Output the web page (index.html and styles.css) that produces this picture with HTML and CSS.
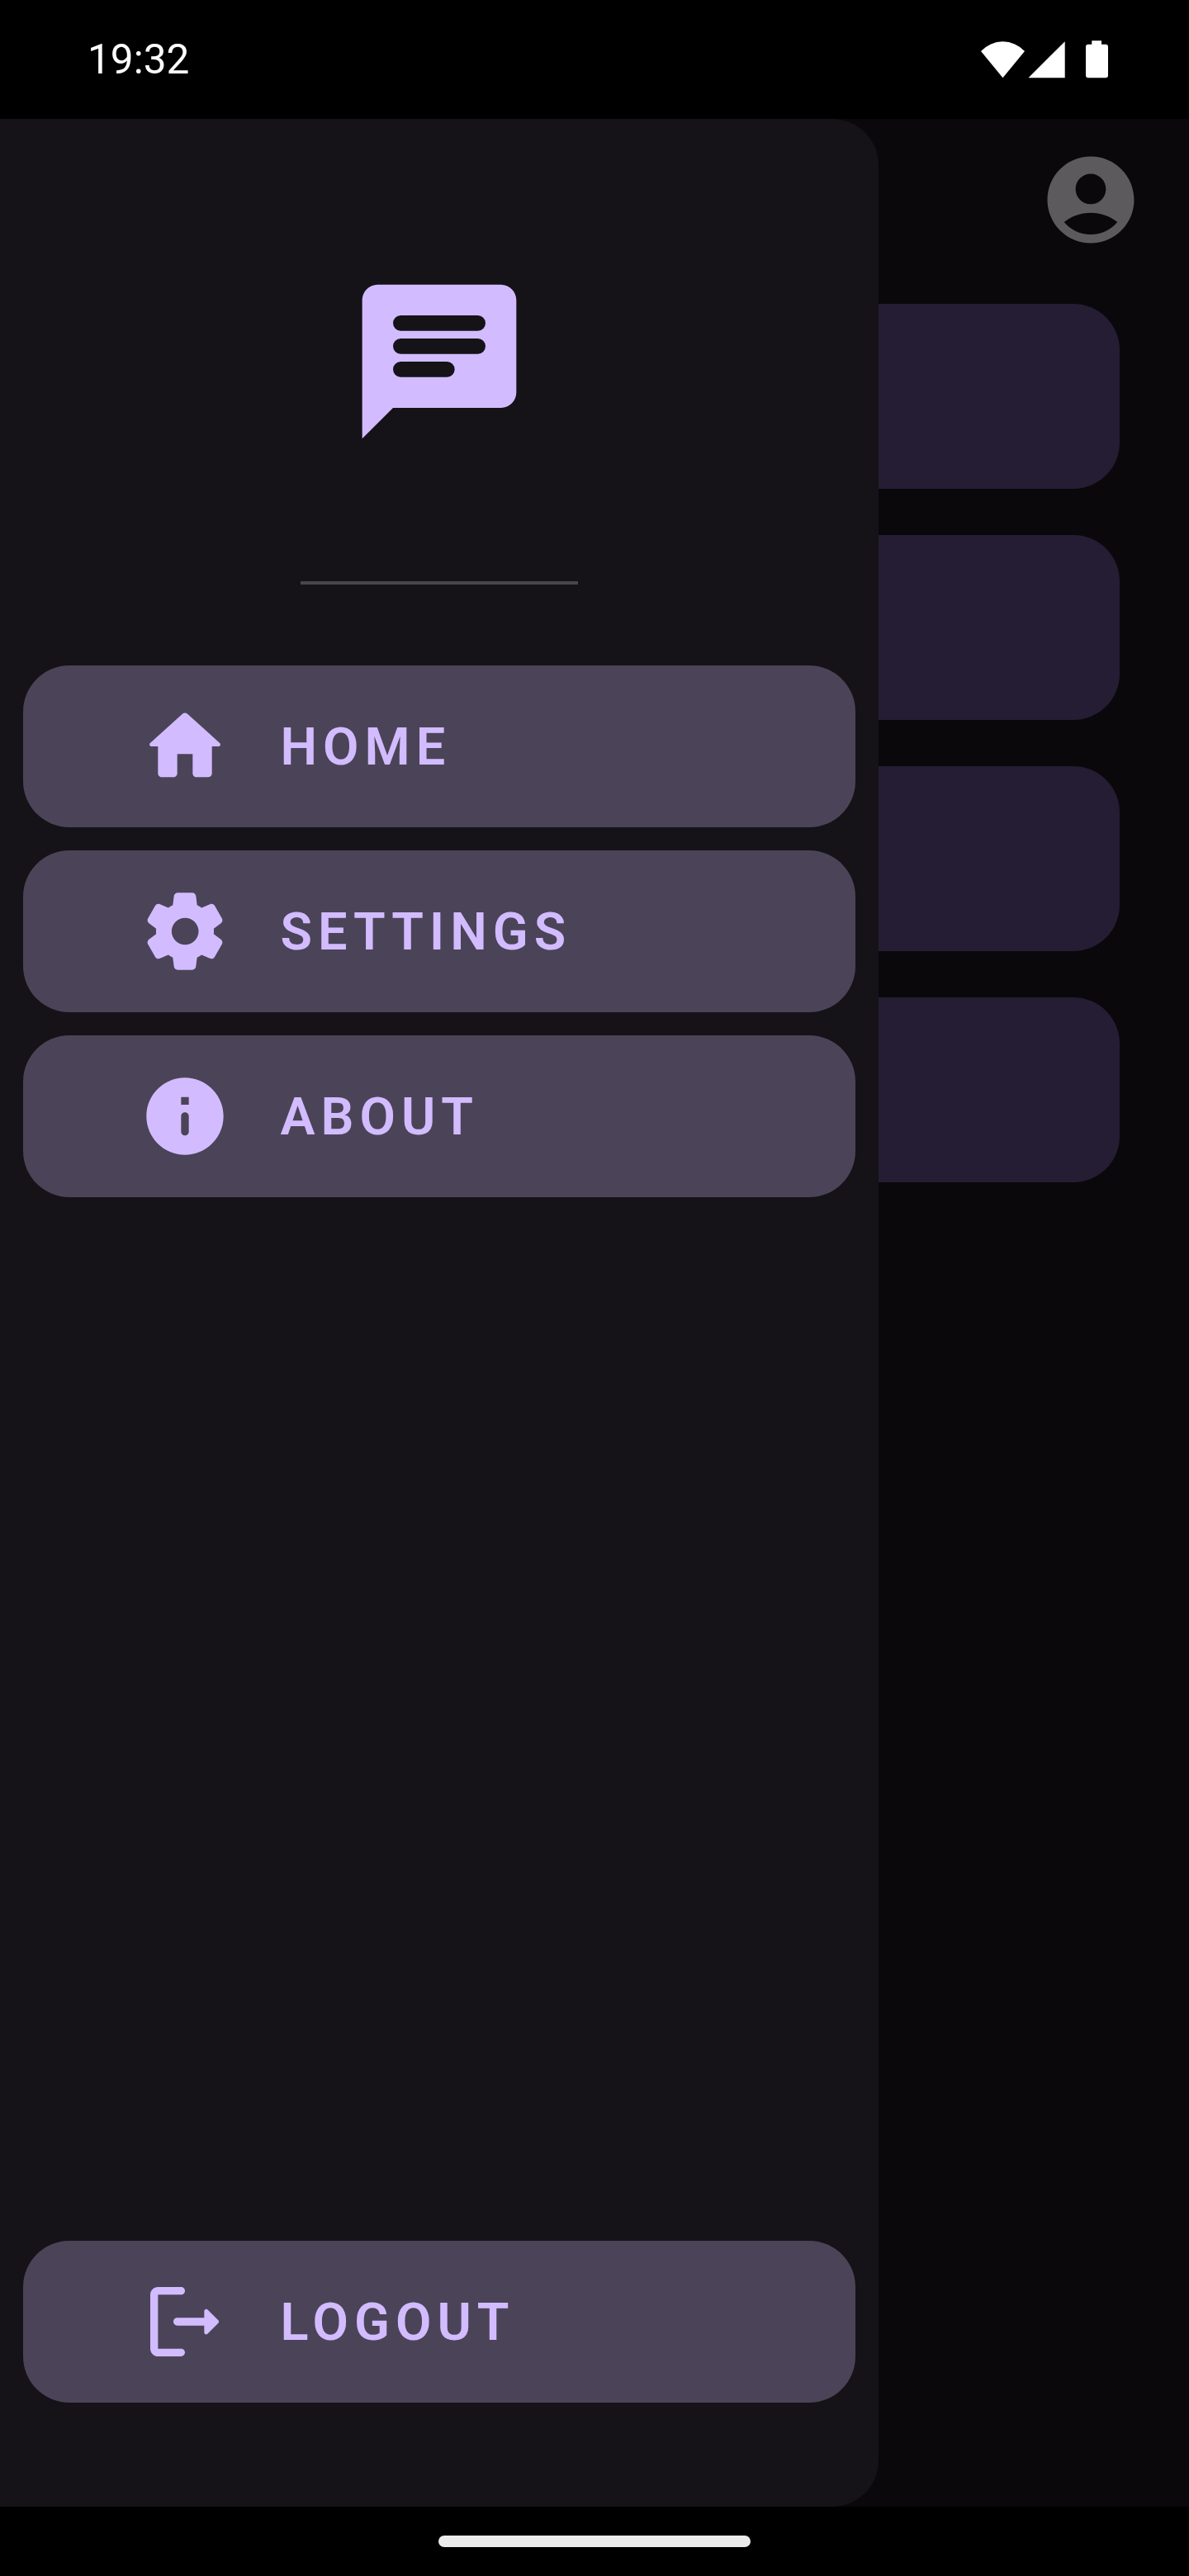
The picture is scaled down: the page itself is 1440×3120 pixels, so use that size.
FILE: index.html
```html
<!DOCTYPE html>
<html lang="en">
<head>
<meta charset="utf-8">
<title>Navigation drawer</title>
<link rel="stylesheet" href="styles.css">
</head>
<body>
<div class="screen">
  <header class="status-bar">
    <span class="clock">19:32</span>
    <svg class="status-icons" viewBox="0 0 156 48" aria-hidden="true">
      <path d="M26.500 46.300L0 14A36 36 0 0 1 53 14Z"/>
      <path d="M57.500 46.300H101.700V2.200Z"/>
      <path d="M134.300 1.200H146V5.700H151a3 3 0 0 1 3 3V43.300a3 3 0 0 1-3 3H130a3 3 0 0 1-3-3V8.700a3 3 0 0 1 3-3H134.300Z"/>
    </svg>
  </header>

  <div class="stage">
    <main class="content">
      <div class="toolbar">
        <svg class="avatar" viewBox="0 0 24 24" aria-hidden="true"><path fill-rule="evenodd" d="M12 2C6.480 2 2 6.480 2 12s4.480 10 10 10 10-4.480 10-10S17.520 2 12 2zM12 6c1.930 0 3.500 1.570 3.500 3.500S13.930 13 12 13s-3.500-1.570-3.500-3.500S10.070 6 12 6zM5.860 17.120C7.550 15.800 9.680 15 12 15s4.450.8 6.140 2.120C16.680 18.880 14.470 20 12 20s-4.680-1.120-6.140-2.880z"/></svg>
      </div>
      <div class="cards">
        <div class="card"></div>
        <div class="card"></div>
        <div class="card"></div>
        <div class="card"></div>
      </div>
    </main>

    <nav class="drawer">
      <svg class="logo" viewBox="0 0 24 24" aria-hidden="true"><path fill-rule="evenodd" d="M20 2H4c-1.100 0-2 .9-2 2v18l4-4h14c1.100 0 2-.9 2-2V4c0-1.100-.9-2-2-2zM7 6h10a1 1 0 0 1 0 2H7a1 1 0 0 1 0-2zM7 9h10a1 1 0 0 1 0 2H7a1 1 0 0 1 0-2zM7 12h6a1 1 0 0 1 0 2H7a1 1 0 0 1 0-2z"/></svg>
      <div class="divider"></div>
      <div class="menu">
        <a class="item">
          <svg class="icon" viewBox="0 0 24 24" aria-hidden="true"><path d="M10 19v-5h4v5c0 .55.45 1 1 1h3c.55 0 1-.45 1-1v-7h1.700c.46 0 .68-.57.33-.87L12.670 3.600c-.38-.34-.96-.34-1.340 0l-8.360 7.530c-.34.3-.13.87.33.87H5v7c0 .55.45 1 1 1h3c.55 0 1-.45 1-1z"/></svg>
          <span class="label">HOME</span>
        </a>
        <a class="item">
          <svg class="icon" viewBox="0 0 24 24" aria-hidden="true"><path d="M19.500 12c0-.23-.01-.45-.03-.68l1.860-1.410c.4-.3.51-.86.26-1.300l-1.870-3.230c-.25-.44-.79-.62-1.250-.42l-2.150.91c-.37-.26-.76-.49-1.170-.68l-.29-2.310c-.06-.5-.49-.88-.99-.88h-3.730c-.51 0-.94.38-1 .88l-.29 2.310c-.41.19-.8.42-1.170.68l-2.150-.91c-.46-.2-1-.02-1.250.42L2.410 8.620c-.25.44-.14.99.26 1.300l1.860 1.410c-.02.22-.03.44-.03.67s.01.45.03.68l-1.860 1.410c-.4.3-.51.86-.26 1.300l1.870 3.230c.25.44.79.62 1.250.42l2.150-.91c.37.26.76.49 1.170.68l.29 2.310c.06.5.49.88.99.88h3.730c.5 0 .93-.38.99-.88l.29-2.310c.41-.19.8-.42 1.170-.68l2.150.91c.46.2 1 .02 1.250-.42l1.870-3.230c.25-.44.14-.99-.26-1.300l-1.860-1.410c.03-.23.04-.45.04-.68zm-7.460 3.500c-1.930 0-3.500-1.570-3.500-3.500s1.570-3.500 3.500-3.500 3.500 1.570 3.500 3.500-1.570 3.500-3.500 3.500z"/></svg>
          <span class="label">SETTINGS</span>
        </a>
        <a class="item">
          <svg class="icon" viewBox="0 0 24 24" aria-hidden="true"><path d="M12 2C6.480 2 2 6.480 2 12s4.480 10 10 10 10-4.480 10-10S17.520 2 12 2zm0 15c-.55 0-1-.45-1-1v-4c0-.55.45-1 1-1s1 .45 1 1v4c0 .55-.45 1-1 1zm1-8h-2V7h2v2z"/></svg>
          <span class="label">ABOUT</span>
        </a>
      </div>
      <a class="item">
        <svg class="icon" viewBox="0 0 24 24" aria-hidden="true"><path d="M5 5h6c.55 0 1-.45 1-1s-.45-1-1-1H5c-1.100 0-2 .9-2 2v14c0 1.100.9 2 2 2h6c.55 0 1-.45 1-1s-.45-1-1-1H5V5z"/><path d="M20.650 11.650l-2.790-2.790c-.32-.32-.86-.1-.86.35V11h-7c-.55 0-1 .45-1 1s.45 1 1 1h7v1.790c0 .45.54.67.85.35l2.790-2.790c.2-.19.2-.51.01-.7z"/></svg>
        <span class="label">LOGOUT</span>
      </a>
    </nav>
  </div>

  <footer class="nav-bar"><div class="handle"></div></footer>
</div>
</body>
</html>
```
FILE: styles.css
```css
* {
  box-sizing: border-box;
}

body {
  margin: 0;
  background: #000;
  font-family: Roboto, "Liberation Sans", sans-serif;
}

svg {
  display: block;
  flex: none;
}

.screen {
  display: flex;
  flex-direction: column;
  width: 1440px;
  height: 3120px;
  overflow: hidden;
}

.status-bar {
  display: flex;
  justify-content: space-between;
  align-items: center;
  height: 144px;
  padding: 0 96px 0 106px;
}

.clock {
  color: #fff;
  font-size: 49.500px;
  line-height: 60px;
}

.status-icons {
  width: 156px;
  height: 48px;
  fill: #fff;
}

/* Dimmed page and the drawer share one grid cell */
.stage {
  display: grid;
  flex: 1;
  background: #0a080b;
}

.content,
.drawer {
  grid-area: 1 / 1;
}

.toolbar {
  display: flex;
  justify-content: flex-end;
  align-items: center;
  height: 196px;
  padding-right: 56px;
}

.avatar {
  width: 126px;
  height: 126px;
  fill: #5d5a5e;
}

.cards {
  display: flex;
  flex-direction: column;
  gap: 56px;
  padding: 28px 84px;
}

.card {
  height: 224px;
  border-radius: 56px;
  background: #241d33;
}

.drawer {
  display: flex;
  flex-direction: column;
  align-items: center;
  width: 1064px;
  padding: 182px 28px 126px;
  border-radius: 0 56px 56px 0;
  background: #151317;
}

.logo {
  width: 224px;
  height: 224px;
  fill: #d2bcff;
}

.divider {
  width: 336px;
  height: 3.5px;
  margin: 154px 0 98px;
  background: #49454f;
}

.menu {
  display: flex;
  flex: 1;
  flex-direction: column;
  gap: 28px;
  width: 100%;
}

.item {
  display: flex;
  align-items: center;
  gap: 59.5px;
  width: 100%;
  height: 196px;
  padding-left: 140px;
  border-radius: 56px;
  background: #4b4458;
}

.icon {
  width: 112px;
  height: 112px;
  fill: #d2bcff;
}

.label {
  padding-top: 2px;
  color: #d2bcff;
  font-size: 63px;
  font-weight: 600;
  line-height: 84px;
  letter-spacing: 7px;
}

.nav-bar {
  display: flex;
  justify-content: center;
  align-items: center;
  height: 84px;
}

.handle {
  width: 378px;
  height: 14px;
  border-radius: 7px;
  background: #ececec;
}
```
